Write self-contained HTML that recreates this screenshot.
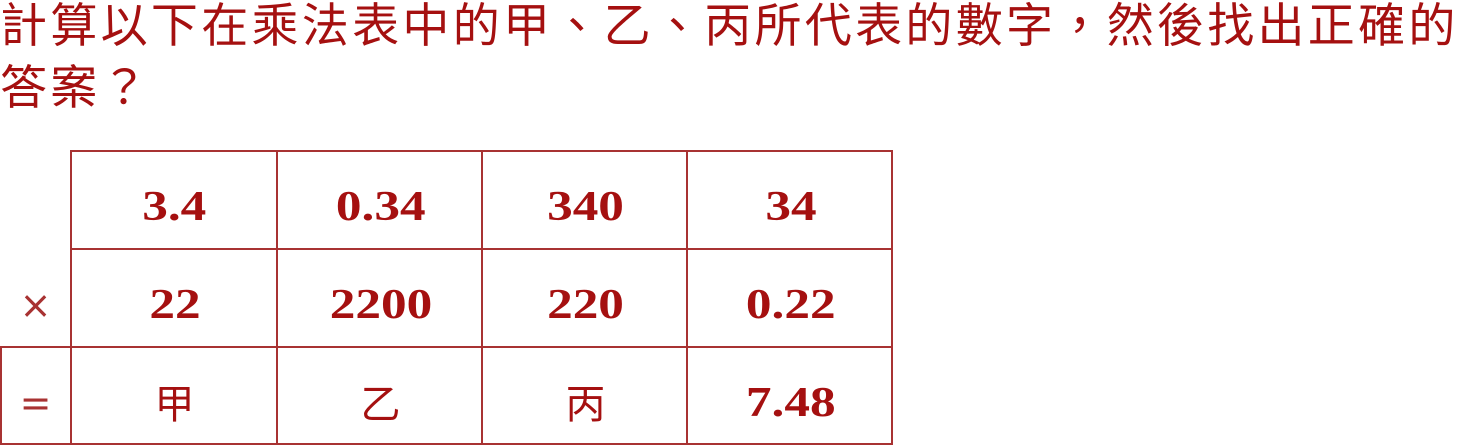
<!DOCTYPE html><html><head><meta charset="utf-8"><style>
body{margin:0;width:1458px;height:446px;background:#fff;overflow:hidden;position:relative;color:#a51010;}
.t{position:absolute;left:0;font-family:"Liberation Sans","Noto Sans CJK TC",sans-serif;font-size:47px;letter-spacing:3.3px;white-space:nowrap;line-height:62px;}
.l{position:absolute;background:#a83232;}
.c{position:absolute;width:205px;height:98px;display:flex;align-items:center;justify-content:center;font-family:"Liberation Serif",serif;font-weight:bold;font-size:42px;padding-top:14px;box-sizing:border-box;}
.c span{display:inline-block;transform:scaleX(1.22);}
.k{font-family:"Noto Sans CJK TC",sans-serif;font-weight:normal;font-size:40px;padding-top:10px;}
.s{position:absolute;width:71px;height:98px;display:flex;align-items:center;justify-content:center;font-family:"DejaVu Sans",sans-serif;font-size:38px;color:#a83232;padding-top:14px;box-sizing:border-box;}
</style></head><body>
<div class="t" style="top:-5px">計算以下在乘法表中的甲、乙、丙所代表的數字，然後找出正確的</div>
<div class="t" style="top:57px">答案？</div>
<div class="l" style="left:71px;top:150px;width:822px;height:2px"></div>
<div class="l" style="left:71px;top:248px;width:822px;height:2px"></div>
<div class="l" style="left:0;top:346px;width:893px;height:2px"></div>
<div class="l" style="left:0;top:443px;width:893px;height:2px"></div>
<div class="l" style="left:0;top:346px;width:2px;height:99px"></div>
<div class="l" style="left:70px;top:150px;width:2px;height:295px"></div>
<div class="l" style="left:276px;top:150px;width:2px;height:295px"></div>
<div class="l" style="left:481px;top:150px;width:2px;height:295px"></div>
<div class="l" style="left:686px;top:150px;width:2px;height:295px"></div>
<div class="l" style="left:891px;top:150px;width:2px;height:295px"></div>
<div class="c" style="left:72px;top:151px"><span>3.4</span></div><div class="c" style="left:278px;top:151px"><span>0.34</span></div><div class="c" style="left:483px;top:151px"><span>340</span></div><div class="c" style="left:688px;top:151px"><span>34</span></div>
<div class="s" style="left:0;top:249px">×</div>
<div class="c" style="left:72px;top:249px"><span>22</span></div><div class="c" style="left:278px;top:249px"><span>2200</span></div><div class="c" style="left:483px;top:249px"><span>220</span></div><div class="c" style="left:688px;top:249px"><span>0.22</span></div>
<div class="s" style="left:0;top:347px">=</div>
<div class="c k" style="left:72px;top:347px">甲</div><div class="c k" style="left:278px;top:347px">乙</div><div class="c k" style="left:483px;top:347px">丙</div><div class="c" style="left:688px;top:347px"><span>7.48</span></div>
</body></html>
